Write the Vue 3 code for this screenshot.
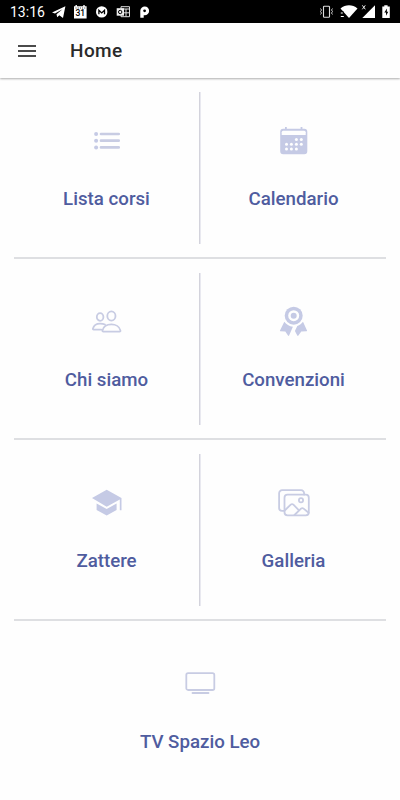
<template>
    <div class="app">
        <!-- status bar -->
        <div class="status-bar">
            <span class="clock">13:16</span>
            <svg class="status-left" width="102" height="23" viewBox="0 0 102 23">
                <path d="M2 12.500 15.400 6.300 13 18 9.300 15.200 7.200 17.300 6.500 14.200 12.500 9.200 5 13.600Z" fill="#fff" />
                <path d="M24 6.200h1.500v-1.200h1.400v1.200h6.400v-1.200h1.400v1.200h1.900v12.300h-12.600z" fill="#fff" />
                <path d="M25.500 8h10" stroke="#000" stroke-width=".8" stroke-dasharray="1 1.200" />
                <text x="30.300" y="16.300" class="day">31</text>
                <circle cx="51.700" cy="11.900" r="5.700" fill="#fff" />
                <path d="M48.900 14.300v-4.100l2.800 2.700 2.800-2.700v4.100" fill="none" stroke="#000" stroke-width="1.300" />
                <path d="M71 6.700h8.500v10H71z" fill="none" stroke="#ddd" stroke-width="1" />
                <path d="M71 9h8.500M76 9v7.500M73 12.800h6.500" stroke="#ddd" stroke-width="1" />
                <rect x="66.700" y="8.200" width="7.300" height="7.500" fill="#eee" />
                <circle cx="70.200" cy="12" r="1.700" fill="none" stroke="#000" stroke-width="1" />
                <path d="M90.300 17.800v-7.100a4.400 4.400 0 1 1 4.400 4.600h-1v2.500z" fill="#fff" />
                <circle cx="94.600" cy="10.800" r="1.400" fill="#000" />
            </svg>
            <svg class="status-right" width="76" height="23" viewBox="0 0 76 23">
                <rect x="7.500" y="6.300" width="6" height="11" rx=".8" fill="none" stroke="#ddd" stroke-width="1.100" />
                <path d="M4.500 8.500l1 1.500-1 1.500 1 1.500-1 1.500M16.500 8.500l-1 1.500 1 1.500-1 1.500 1 1.500" fill="none" stroke="#ddd" stroke-width=".9" />
                <path d="M24.500 8.600c5-4.400 12-4.400 17 0L33 18z" fill="#fff" />
                <path d="M24 12.300h3.500M24.500 15.200h3.500M26 17h2.500" stroke="#000" stroke-width="2" />
                <path d="M24.800 13h2M24.800 16.500h3" stroke="#fff" stroke-width="1" />
                <path d="M59 5.300V18H46.300z" fill="#fff" />
                <path d="M46.300 5.300l3 4M49.300 5.300l-3 4" stroke="#fff" stroke-width=".9" />
                <path d="M66.300 6.500h2V5.200h3.300v1.300h2.200V18h-7.500z" fill="#fff" />
                <path d="M71 8.500l-2.700 4h1.700v3.300l2.300-4.100h-1.500z" fill="#000" />
            </svg>
        </div>

        <!-- toolbar -->
        <header class="toolbar">
            <button class="menu-button" aria-label="Menu">
                <span class="menu-line"></span>
                <span class="menu-line"></span>
                <span class="menu-line"></span>
            </button>
            <h1 class="title">Home</h1>
        </header>

        <main class="content">
            <div v-for="(row, i) in rows" :key="i" class="row">
                <a v-for="item in row" :key="item.icon" class="cell">
                    <svg class="icon" width="32" height="32" viewBox="0 0 32 32">
                        <g v-if="item.icon === 'list'">
                            <path class="line list-line" d="M10 9h17.700M10 15.700h17.700M10 22.400h17.700" />
                            <circle class="fill" cx="5.100" cy="9" r="2" />
                            <circle class="fill" cx="5.100" cy="15.700" r="2" />
                            <circle class="fill" cx="5.100" cy="22.400" r="2" />
                        </g>
                        <g v-else-if="item.icon === 'calendar'">
                            <path class="fill" fill-rule="evenodd" d="M5.200 3.700h1.800v-1.700h1.800v1.700h13.800v-1.700h1.800v1.700h1.900a3 3 0 0 1 3 3v19.500a3 3 0 0 1-3 3H5.200a3 3 0 0 1-3-3V6.700a3 3 0 0 1 3-3z" />
                            <path class="paper" d="M3.700 9.900V7.300a1.500 1.500 0 0 1 1.500-1.500h21a1.500 1.500 0 0 1 1.500 1.500v2.600z" />
                            <circle v-for="d in calendarDots" :key="d.join()" class="paper" :cx="d[0]" :cy="d[1]" r="1.500" />
                        </g>
                        <g v-else-if="item.icon === 'people'">
                            <ellipse class="line" cx="20.400" cy="10" rx="4.100" ry="4.600" />
                            <ellipse class="line" cx="9.100" cy="11" rx="3.300" ry="3.800" />
                            <path class="line" d="M20.400 18.400c-4.200 0-8 2.200-8.900 6-.2.800.1 1.300.9 1.300h16.100c.8 0 1.100-.5.900-1.300-.9-3.800-4.800-6-9-6z" />
                            <path class="line" d="M14 18.500c-1.500-.7-3.200-.9-4.900-.9-3.300 0-6.400 1.900-7.200 5-.1.600.1 1.100.8 1.100h7.600" />
                        </g>
                        <g v-else-if="item.icon === 'ribbon'">
                            <circle class="fill" cx="15.700" cy="9.700" r="9" />
                            <circle class="paper" cx="15.700" cy="9.700" r="5.500" />
                            <circle class="fill" cx="15.700" cy="9.700" r="3" />
                            <path class="fill" d="M6.300 15.800c1.900 2.700 5 4.600 8.600 4.900l-3.800 8.800c-.2.500-.8.500-1.100.1l-2.700-4.200-4.700-.1c-.6 0-.8-.5-.6-.9z" />
                            <path class="fill" d="M25 15.800c-1.300 1.900-3.300 3.500-5.700 4.300l-2.400 4.900 2.400 4.500c.2.500.8.500 1.100.1l2.900-4.200 5.100-.1c.6 0 .8-.5.6-.9z" />
                        </g>
                        <g v-else-if="item.icon === 'school'">
                            <path class="fill" d="M15.700 2.700 30.500 11v12.300h-1.700V12.500l-13.100 7.300L1 11z" />
                            <path class="fill" d="M5.600 16.400l10.100 5.700 9.900-5.700v6.600l-9.900 5.500-10.100-5.500z" />
                        </g>
                        <g v-else-if="item.icon === 'images'">
                            <rect class="line" x="6.500" y="7.700" width="24.300" height="20.600" rx="3" />
                            <path class="line" d="M26.100 7.600V6.200a3 3 0 0 0-3-3H4.100a3 3 0 0 0-3 3v14.700a3 3 0 0 0 3 3h2.200" />
                            <circle class="line" cx="23" cy="13.300" r="2.100" />
                            <path class="line" d="M6.700 23.500l6-5.800a2 2 0 0 1 2.700 0l5.600 5.600M16.500 28l6.500-6.300a2 2 0 0 1 2.600-.1l5 4.200" />
                        </g>
                        <g v-else-if="item.icon === 'tv'">
                            <rect class="line" x="2.300" y="5.200" width="28" height="16.800" rx="1.800" />
                            <path class="line" d="M8.500 25h16" />
                        </g>
                    </svg>
                    <span class="label">{{ item.label }}</span>
                </a>
            </div>
        </main>
    </div>
</template>

<script setup>
const rows = [
    [
        { icon: 'list', label: 'Lista corsi' },
        { icon: 'calendar', label: 'Calendario' }
    ],
    [
        { icon: 'people', label: 'Chi siamo' },
        { icon: 'ribbon', label: 'Convenzioni' }
    ],
    [
        { icon: 'school', label: 'Zattere' },
        { icon: 'images', label: 'Galleria' }
    ],
    [
        { icon: 'tv', label: 'TV Spazio Leo' }
    ]
]

// days marked on the calendar icon
const calendarDots = [
    [18.4, 14.4], [23.3, 14.4],
    [8.5, 19.2], [13.4, 19.2], [18.4, 19.2], [23.3, 19.2],
    [8.5, 24.1], [13.4, 24.1], [18.4, 24.1]
]
</script>

<style>
body {
    background: #fefefe;
}
</style>

<style scoped>
.app {
    height: 800px;
    overflow: hidden;
    background: #fefefe;
    font-family: Roboto, sans-serif;
}

.status-bar {
    display: flex;
    align-items: center;
    height: 23px;
    padding: 0 8px 0 10px;
    background: #000;
    color: #fff;
}

.clock {
    width: 40px;
    padding-top: 2px;
    font-size: 14px;
    line-height: 21px;
}

.status-right {
    margin-left: auto;
}

.day {
    font-size: 8.5px;
    font-weight: 500;
    text-anchor: middle;
}

.toolbar {
    display: flex;
    align-items: center;
    height: 55px;
    padding-left: 18px;
    background: #fefefe;
    box-shadow: 0 1px 2px rgba(0, 0, 0, 0.32);
}

.menu-button {
    display: flex;
    flex-direction: column;
    gap: 3px;
    width: 18px;
    padding: 0;
    border: none;
    background: none;
}

.menu-line {
    height: 2px;
    background: #4a4a4a;
}

.title {
    margin: 0 0 0 34px;
    font-size: 19px;
    font-weight: 500;
    letter-spacing: 0.4px;
    color: #2a2a2a;
}

.row {
    display: flex;
    margin: 0 14px;
    padding: 14px 0 13px;
    border-bottom: 2px solid #dedfe2;
}

.row:last-child {
    border-bottom: none;
}

.cell {
    display: flex;
    flex: 1 1 0;
    flex-direction: column;
    align-items: center;
    height: 152px;
    padding-top: 33px;
    box-sizing: border-box;
}

.cell + .cell {
    padding-left: 1px;
    border-left: 1px solid #d3d3dc;
    box-shadow: inset 1px 0 #e9e9f0;
}

.icon {
    display: block;
    flex-shrink: 0;
}

.label {
    margin-top: 31px;
    font-size: 18.7px;
    font-weight: 500;
    line-height: 22px;
    color: #4f5c9f;
}

.fill {
    fill: #c5cae5;
}

.paper {
    fill: #fefefe;
}

.line {
    fill: none;
    stroke: #c8cce3;
    stroke-width: 1.8;
    stroke-linecap: round;
    stroke-linejoin: round;
}

.list-line {
    stroke-width: 2.7;
}
</style>
